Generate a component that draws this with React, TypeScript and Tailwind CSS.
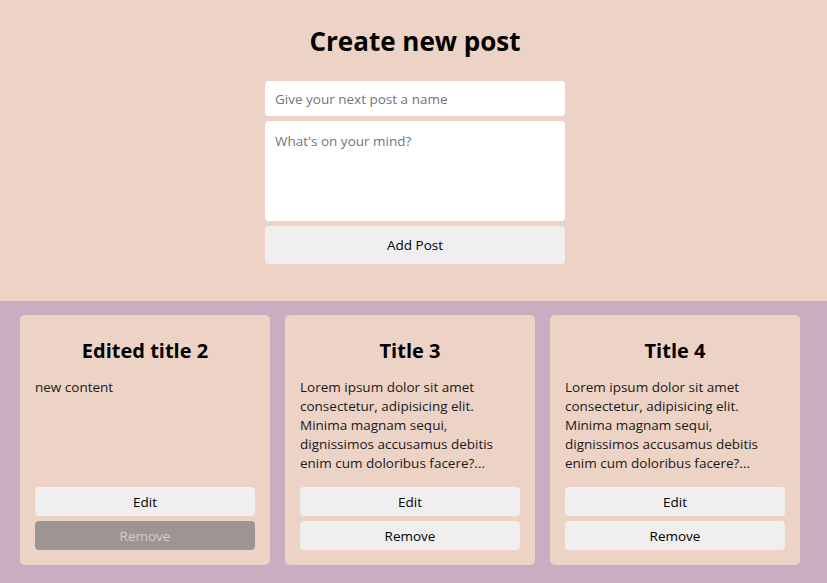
import { useState } from "react";

type Post = {
  id: number;
  title: string;
  body: string;
  locked?: boolean;
};

const LOREM =
  "Lorem ipsum dolor sit amet consectetur, adipisicing elit. Minima magnam sequi, dignissimos accusamus debitis enim cum doloribus facere?...";

const POSTS: Post[] = [
  { id: 2, title: "Edited title 2", body: "new content", locked: true },
  { id: 3, title: "Title 3", body: LOREM },
  { id: 4, title: "Title 4", body: LOREM },
];

const font = { fontFamily: "'Segoe UI', 'Open Sans', 'Noto Sans', sans-serif" };

function PostCard({ post }: { post: Post }) {
  return (
    <div className="flex h-[250px] w-[250px] flex-col rounded-[5px] bg-[#edd3c5] px-[15px] pb-[15px] pt-[22px]">
      <h2 className="text-center text-[20px] font-bold leading-[28px] text-black">
        {post.title}
      </h2>
      <p className="mt-[13px] text-[13.5px] leading-[19px] text-[#1a1a1a]">{post.body}</p>
      <div className="mt-auto flex flex-col gap-[5px]">
        <button className="h-[29px] rounded-[4px] bg-[#efefef] pt-px text-[13.5px] text-black">
          Edit
        </button>
        <button
          disabled={post.locked}
          className={
            post.locked
              ? "h-[29px] rounded-[4px] bg-[#9c9593] pt-px text-[13.5px] text-[#decbc2]"
              : "h-[29px] rounded-[4px] bg-[#efefef] pt-px text-[13.5px] text-black"
          }
        >
          Remove
        </button>
      </div>
    </div>
  );
}

export default function App() {
  const [title, setTitle] = useState("");
  const [body, setBody] = useState("");

  return (
    <div className="min-h-[583px] bg-[#c9adc1]" style={font}>
      <section className="flex flex-col items-center bg-[#edd3c5] pb-[37px] pl-[3px] pt-[23px]">
        <h1 className="text-[26px] font-bold leading-[36px] text-black">Create new post</h1>
        <form
          className="mt-[22px] flex w-[300px] flex-col gap-[5px]"
          onSubmit={(e) => e.preventDefault()}
        >
          <input
            value={title}
            onChange={(e) => setTitle(e.target.value)}
            placeholder="Give your next post a name"
            className="h-[35px] rounded-[4px] bg-white px-[10px] text-[13.5px] placeholder:text-[#757575] outline-none"
          />
          <textarea
            value={body}
            onChange={(e) => setBody(e.target.value)}
            placeholder="What's on your mind?"
            className="h-[100px] resize-none rounded-[4px] bg-white px-[10px] pb-[10px] pt-[11px] text-[13.5px] leading-[19px] placeholder:text-[#757575] outline-none"
          />
          <button className="h-[38px] rounded-[4px] bg-[#efefef] pt-px text-[13.5px] text-black">
            Add Post
          </button>
        </form>
      </section>
      <section className="flex gap-[15px] pl-[20px] pt-[14px] pb-[18px]">
        {POSTS.map((p) => (
          <PostCard key={p.id} post={p} />
        ))}
      </section>
    </div>
  );
}
